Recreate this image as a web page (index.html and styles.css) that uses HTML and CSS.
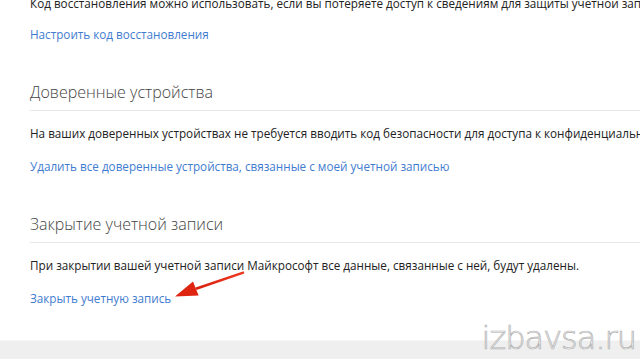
FILE: index.html
```html
<!DOCTYPE html>
<html lang="ru">
<head>
<meta charset="utf-8">
<link rel="stylesheet" href="styles.css">
</head>
<body>
<div class="page">
  <main class="content">
    <section class="block first">
      <p class="text">Код восстановления можно использовать, если вы потеряете доступ к сведениям для защиты учетной записи.</p>
      <a class="link" href="#">Настроить код восстановления</a>
    </section>
    <section class="block">
      <h2 class="title">Доверенные устройства</h2>
      <p class="text">На ваших доверенных устройствах не требуется вводить код безопасности для доступа к конфиденциальным сведениям.</p>
      <a class="link" href="#">Удалить все доверенные устройства, связанные с моей учетной записью</a>
    </section>
    <section class="block">
      <h2 class="title">Закрытие учетной записи</h2>
      <p class="text">При закрытии вашей учетной записи Майкрософт все данные, связанные с ней, будут удалены.</p>
      <a class="link" href="#">Закрыть учетную запись</a>
    </section>
  </main>
  <footer class="footer"></footer>
  <svg class="arrow" width="80" height="34" viewBox="170 268 80 34" aria-hidden="true">
    <defs>
      <linearGradient id="ag" x1="0" y1="0" x2="1" y2="0">
        <stop offset="0" stop-color="#d8200f"/>
        <stop offset="1" stop-color="#ee3a22"/>
      </linearGradient>
    </defs>
    <path d="M243.6 271.2 L244.4 273.6 L196.5 290 L195.5 287.4 Z" fill="url(#ag)"/>
    <path d="M175 296.5 L193 281.6 L198.6 295.6 Z" fill="#df2412"/>
  </svg>
  <div class="watermark">izbavsa.ru</div>
</div>
</body>
</html>
```
FILE: styles.css
```css
html, body {
  margin: 0;
  padding: 0;
  background: #ffffff;
}
body {
  width: 640px;
  height: 359px;
  overflow: hidden;
  font-family: "Open Sans", "Noto Sans", "DejaVu Sans", sans-serif;
}
.page {
  position: relative;
  width: 640px;
  height: 359px;
  overflow: hidden;
}
.content {
  padding-left: 30px;
}
.block {
  display: flex;
  flex-direction: column;
  align-items: flex-start;
  margin-top: 37px;
}
.block.first {
  margin-top: -6px;
}
.title {
  margin: 0;
  align-self: stretch;
  font-size: 16px;
  font-weight: 300;
  line-height: 24px;
  color: #444;
  padding-bottom: 6px;
  border-bottom: 1px solid #e8e8e8;
}
.text {
  margin: 13px 0 0;
  font-size: 11.7px;
  line-height: 18px;
  color: #222;
  white-space: nowrap;
}
.first .text {
  margin-top: 0;
}
.link {
  margin-top: 15px;
  font-size: 11.7px;
  line-height: 18px;
  color: #3f7cd0;
  text-decoration: none;
  white-space: nowrap;
}
.first .link {
  margin-top: 13px;
}
.footer {
  margin-top: 33px;
  height: 30px;
  background: #efefef;
  border-top: 1px solid #f6f6f6;
}
.arrow {
  position: absolute;
  left: 170px;
  top: 268px;
}
.watermark {
  position: absolute;
  right: 4px;
  bottom: 3px;
  font-family: "DejaVu Sans", sans-serif;
  font-weight: 200;
  font-size: 32px;
  line-height: 36px;
  letter-spacing: -1px;
  color: #f4f4f4;
  -webkit-text-stroke: 0.7px #b0b0b0;
}
```
